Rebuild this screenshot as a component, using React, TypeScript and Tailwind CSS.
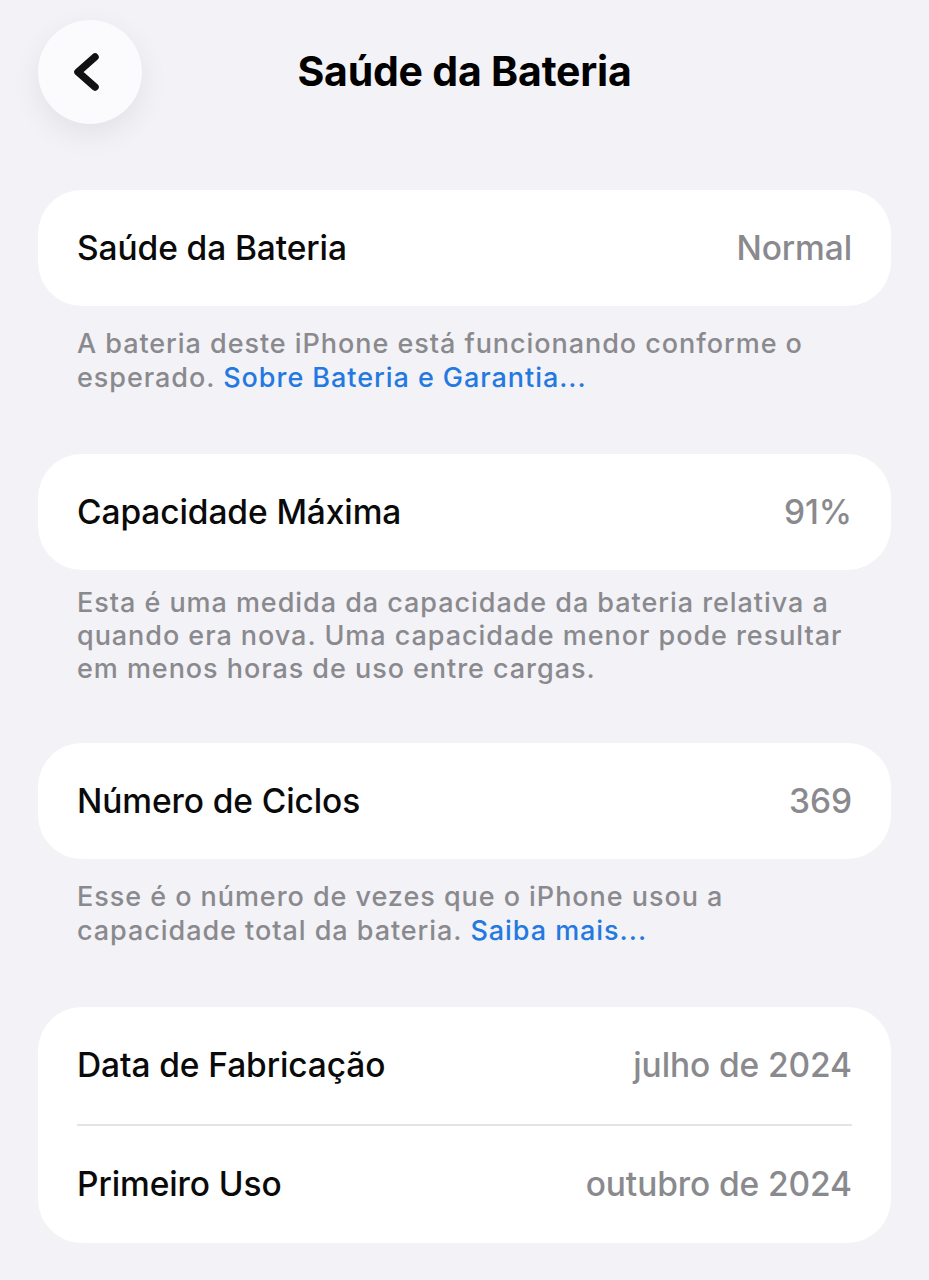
import React from "react";

const font = { fontFamily: 'Inter, "Noto Sans", "Liberation Sans", sans-serif' };

function Row({ label, value, h = "h-[116px]" }: { label: string; value: string; h?: string }) {
  return (
    <div className={`flex ${h} items-center justify-between px-[39px]`}>
      <span className="text-[33.5px] font-medium tracking-[-0.1px] text-[#0a0a0a]">{label}</span>
      <span className="text-[33.5px] font-medium tracking-[-0.1px] text-[#8a8a8e]">{value}</span>
    </div>
  );
}

function Card({ children }: { children: React.ReactNode }) {
  return <div className="overflow-hidden rounded-[44px] bg-white">{children}</div>;
}

function Footer({ children, tight = false }: { children: React.ReactNode; tight?: boolean }) {
  return (
    <p
      className={
        tight
          ? "px-[39px] pt-[16px] text-[27px] font-medium leading-[33px] tracking-[0.95px] text-[#8a8a8e]"
          : "px-[39px] pt-[21px] text-[27px] font-medium leading-[34px] tracking-[0.95px] text-[#8a8a8e]"
      }
    >
      {children}
    </p>
  );
}

export default function App() {
  return (
    <div className="min-h-[1280px] w-full bg-[#f2f2f7]" style={font}>
      <div className="px-[38px] pt-[20px]">
        <div className="grid grid-cols-[104px_1fr_104px] items-center">
          <div className="flex h-[104px] w-[104px] items-center justify-center rounded-full bg-[#fbfbfd] shadow-[0_10px_30px_rgba(0,0,0,0.07)]">
            <svg width="104" height="104" viewBox="0 0 104 104">
              <path
                d="M57 37 L40 52 L57 67"
                fill="none"
                stroke="#111113"
                strokeWidth="7.5"
                strokeLinecap="round"
                strokeLinejoin="round"
              />
            </svg>
          </div>
          <h1 className="text-center text-[41px] font-bold tracking-[-0.2px] text-black">
            Saúde da Bateria
          </h1>
          <div />
        </div>

        <div className="mt-[66px]">
          <Card>
            <Row label="Saúde da Bateria" value="Normal" />
          </Card>
          <Footer>
            A bateria deste iPhone está funcionando conforme o
            <br />
            esperado. <span className="text-[#2479e0]">Sobre Bateria e Garantia...</span>
          </Footer>
        </div>

        <div className="mt-[59px]">
          <Card>
            <Row label="Capacidade Máxima" value="91%" />
          </Card>
          <Footer tight>
            Esta é uma medida da capacidade da bateria relativa a
            <br />
            quando era nova. Uma capacidade menor pode resultar
            <br />
            em menos horas de uso entre cargas.
          </Footer>
        </div>

        <div className="mt-[58px]">
          <Card>
            <Row label="Número de Ciclos" value="369" />
          </Card>
          <Footer>
            Esse é o número de vezes que o iPhone usou a
            <br />
            capacidade total da bateria. <span className="text-[#2479e0]">Saiba mais...</span>
          </Footer>
        </div>

        <div className="mt-[59px]">
          <Card>
            <Row label="Data de Fabricação" value="julho de 2024" h="h-[117px]" />
            <div className="mx-[39px] h-[2px] bg-[#e4e4e8]" />
            <Row label="Primeiro Uso" value="outubro de 2024" h="h-[117px]" />
          </Card>
        </div>
      </div>
    </div>
  );
}
